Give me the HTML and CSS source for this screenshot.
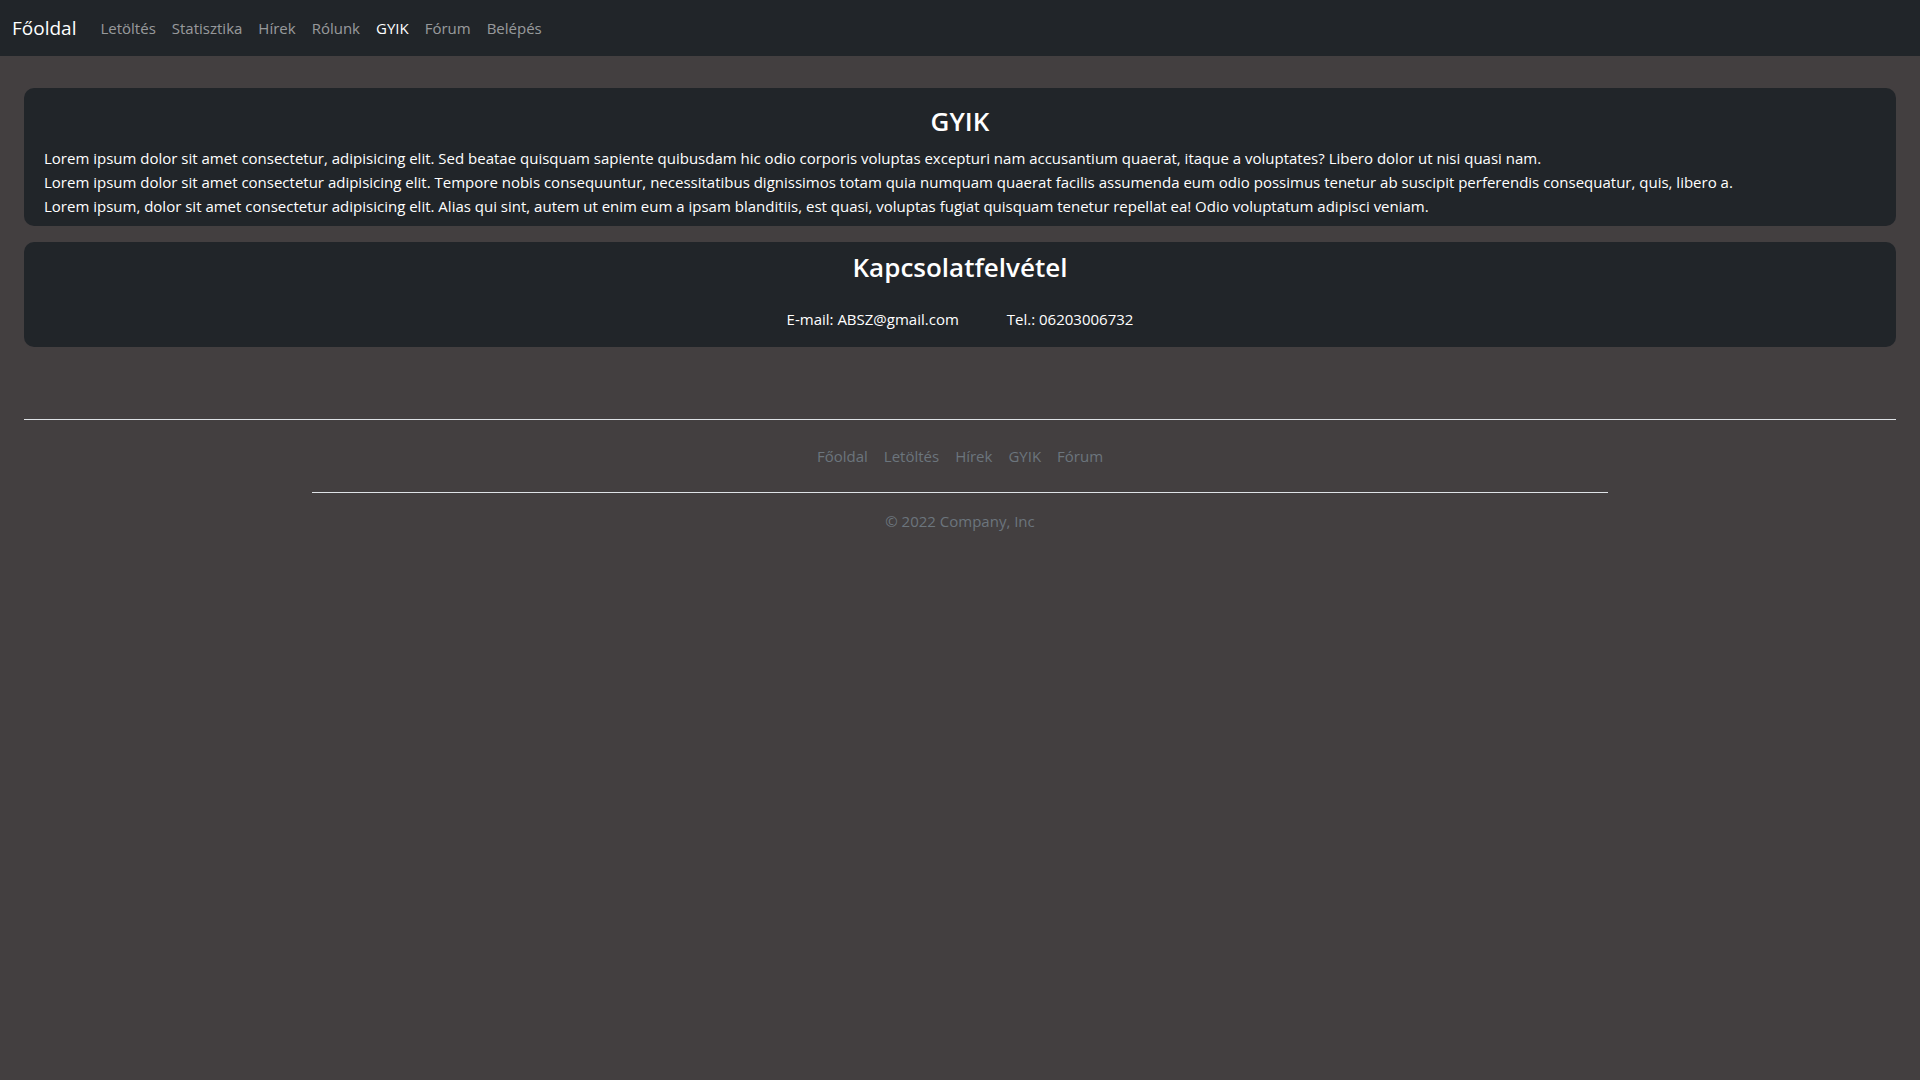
FILE: index.html
```html
<!DOCTYPE html>
<html lang="hu">
<head>
<meta charset="utf-8">
<meta name="viewport" content="width=device-width, initial-scale=1">
<title>GYIK</title>
<link rel="stylesheet" href="styles.css">
</head>
<body>
<nav class="navbar">
  <a class="brand" href="#">Főoldal</a>
  <ul class="nav-links">
    <li><a href="#">Letöltés</a></li>
    <li><a href="#">Statisztika</a></li>
    <li><a href="#">Hírek</a></li>
    <li><a href="#">Rólunk</a></li>
    <li><a class="active" href="#">GYIK</a></li>
    <li><a href="#">Fórum</a></li>
    <li><a href="#">Belépés</a></li>
  </ul>
</nav>
<main class="content">
  <section class="card faq">
    <h1>GYIK</h1>
    <p>Lorem ipsum dolor sit amet consectetur, adipisicing elit. Sed beatae quisquam sapiente quibusdam hic odio corporis voluptas excepturi nam accusantium quaerat, itaque a voluptates? Libero dolor ut nisi quasi nam.</p>
    <p>Lorem ipsum dolor sit amet consectetur adipisicing elit. Tempore nobis consequuntur, necessitatibus dignissimos totam quia numquam quaerat facilis assumenda eum odio possimus tenetur ab suscipit perferendis consequatur, quis, libero a.</p>
    <p>Lorem ipsum, dolor sit amet consectetur adipisicing elit. Alias qui sint, autem ut enim eum a ipsam blanditiis, est quasi, voluptas fugiat quisquam tenetur repellat ea! Odio voluptatum adipisci veniam.</p>
  </section>
  <section class="card contact">
    <h2>Kapcsolatfelvétel</h2>
    <div class="contact-row">
      <span>E-mail: ABSZ@gmail.com</span>
      <span>Tel.: 06203006732</span>
    </div>
  </section>
</main>
<footer class="footer">
  <div class="footer-inner">
    <ul class="footer-links">
      <li><a href="#">Főoldal</a></li>
      <li><a href="#">Letöltés</a></li>
      <li><a href="#">Hírek</a></li>
      <li><a href="#">GYIK</a></li>
      <li><a href="#">Fórum</a></li>
    </ul>
    <p class="copyright">© 2022 Company, Inc</p>
  </div>
</footer>
</body>
</html>
```
FILE: styles.css
```css
* {
  box-sizing: border-box;
}

body {
  margin: 0;
  background: #433f40;
  color: #fff;
  font: 15px/24px "Open Sans", "Noto Sans", sans-serif;
}

h1, h2, p, ul {
  margin: 0;
  padding: 0;
}

ul {
  display: flex;
  list-style: none;
}

a {
  color: inherit;
  text-decoration: none;
}

.navbar {
  display: flex;
  align-items: center;
  gap: 16px;
  padding: 8px 12px;
  background: #212529;
}

.brand {
  padding: 5px 0;
  font-size: 19px;
  line-height: 30px;
}

.nav-links a {
  display: block;
  padding: 8px;
  color: rgba(255, 255, 255, 0.55);
}

.nav-links .active {
  color: #fff;
}

.content {
  display: grid;
  gap: 16px;
  padding: 32px 24px 0;
}

.card {
  border-radius: 10px;
  background: #212529;
}

.card h1,
.card h2 {
  font-size: 26px;
  font-weight: 600;
  line-height: 34px;
  text-align: center;
}

.faq {
  padding: 16px 20px 8px;
}

.faq h1 {
  margin-bottom: 8px;
}

.contact {
  padding: 8px 20px 16px;
}

.contact-row {
  display: flex;
  justify-content: center;
  gap: 48px;
  padding-top: 23px;
}

.footer {
  margin: 72px 24px 0;
  border-top: 1px solid #dee2e6;
  color: #6c757d;
}

.footer-inner {
  max-width: 1296px;
  margin: 0 auto;
  padding-top: 24px;
}

.footer-links {
  flex-wrap: wrap;
  justify-content: center;
  gap: 16px;
  padding-bottom: 24px;
  border-bottom: 1px solid #dee2e6;
}

.copyright {
  padding-top: 16px;
  text-align: center;
}
```
